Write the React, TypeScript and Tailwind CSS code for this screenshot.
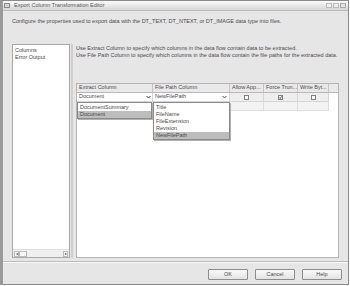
const cols = [
  { label: "Extract Column", w: "w-[76px]" },
  { label: "File Path Column", w: "w-[77px]" },
  { label: "Allow App...", w: "w-[34px]" },
  { label: "Force Trun...", w: "w-[34px]" },
  { label: "Write Byt...", w: "w-[31px]" },
];

function Arrow() {
  return (
    <svg width="5" height="4" viewBox="0 0 5 4" className="shrink-0">
      <path d="M0.5 1 L2.5 3 L4.5 1" fill="none" stroke="#444" strokeWidth="1" />
    </svg>
  );
}

function Check({ checked }: { checked?: boolean }) {
  return (
    <div className="w-[5px] h-[5px] border border-[#808080] bg-white flex items-center justify-center">
      {checked && (
        <svg width="3" height="3" viewBox="0 0 3 3">
          <path d="M0.3 1.5 L1.2 2.5 L2.7 0.4" fill="none" stroke="#222" strokeWidth="0.8" />
        </svg>
      )}
    </div>
  );
}

export default function App() {
  return (
    <div className="w-[350px] h-[286px] bg-white font-['Liberation_Sans',Arial,sans-serif] text-[5.5px] leading-none text-[#4a4a4a]">
      <div className="w-[349px] h-[285px] border border-[#8a8a8a] border-l-[3px] border-l-[#9a9a9a] bg-[#e6e6e6] flex flex-col">
        {/* Title bar */}
        <div className="h-[10px] shrink-0 bg-linear-to-b from-[#fbfbfb] to-[#d6d6d6] border-b border-[#bdbdbd] flex items-center pl-[1px] pr-[2px]">
          <div className="w-[6px] h-[5px] border border-[#888] bg-[#cfd6de] mr-[4px]" />
          <span className="text-[#555]">Export Column Transformation Editor</span>
          <div className="ml-auto flex gap-[1px]">
            <div className="w-[6px] h-[5px] border border-[#bbb] bg-[#eee]" />
            <div className="w-[6px] h-[5px] border border-[#bbb] bg-[#eee]" />
            <div className="w-[6px] h-[5px] border border-[#aaa] bg-[#e4e4e4]" />
          </div>
        </div>

        {/* Description */}
        <div className="mt-[7px] pl-[9px] leading-[7px]">
          Configure the properties used to export data with the DT_TEXT, DT_NTEXT, or DT_IMAGE data type into files.
        </div>

        {/* Main */}
        <div className="mt-[19px] flex h-[214px] pl-[9px]">
          {/* Left list */}
          <div className="w-[58px] bg-white border border-[#a8a8a8] flex flex-col">
            <div className="flex-1 pl-[2px] pt-[2px] leading-[7px]">
              <div>Columns</div>
              <div>Error Output</div>
            </div>
            <div className="h-[8px] bg-[#efefef] flex items-center px-[1px] border-t border-[#e0e0e0]">
              <div className="w-[5px] h-[6px] border border-[#bbb] bg-[#f6f6f6] text-[4px] flex items-center justify-center">◂</div>
              <div className="w-[8px] h-[6px] border border-[#bbb] bg-[#f8f8f8]" />
              <div className="ml-auto w-[5px] h-[6px] border border-[#bbb] bg-[#f6f6f6] text-[4px] flex items-center justify-center">▸</div>
            </div>
          </div>
          <div className="w-[2px] ml-[1px] bg-[#cfcfcf]" />

          {/* Right side */}
          <div className="ml-[3px] w-[263px] flex flex-col">
            <div className="leading-[7px] pt-[1px] h-[39px] whitespace-nowrap">
              <div>Use Extract Column to specify which columns in the data flow contain data to be extracted.</div>
              <div>Use File Path Column to specify which columns in the data flow contain the file paths for the extracted data.</div>
            </div>
            <div className="relative flex-1 bg-white border border-[#b5b5b5]">
              {/* header */}
              <div className="flex h-[9px] bg-[#e9e9e9] border-b border-[#b8b8b8]">
                {cols.map((c) => (
                  <div key={c.label} className={`${c.w} shrink-0 whitespace-nowrap overflow-hidden border-r border-[#c4c4c4] pl-[2px] flex items-center`}>
                    {c.label}
                  </div>
                ))}
              </div>
              {/* row 1 */}
              <div className="flex h-[9px]">
                <div className="w-[76px] border-r border-b border-[#d6d6d6] bg-white flex items-center pl-[2px] pr-[1px]">
                  <span className="flex-1">Document</span>
                  <Arrow />
                </div>
                <div className="w-[77px] border-r border-b border-[#d6d6d6] bg-white flex items-center pl-[2px] pr-[2px]">
                  <span className="flex-1">NewFilePath</span>
                  <Arrow />
                </div>
                <div className="w-[34px] border-r border-b border-[#d6d6d6] bg-[#eeeeee] flex items-center justify-center">
                  <Check />
                </div>
                <div className="w-[34px] border-r border-b border-[#d6d6d6] bg-[#eeeeee] flex items-center justify-center">
                  <Check checked />
                </div>
                <div className="w-[31px] border-r border-b border-[#d6d6d6] bg-[#eeeeee] flex items-center justify-center">
                  <Check />
                </div>
              </div>
              {/* row 2 */}
              <div className="flex h-[9px]">
                {cols.map((c) => (
                  <div key={c.label} className={`${c.w} border-r border-b border-[#dedede] bg-[#f3f3f3]`} />
                ))}
              </div>

              {/* dropdown 1 */}
              <div className="absolute left-0 top-[18px] w-[75px] bg-white border border-[#8a8a8a] shadow-[1px_1px_0_#b0b0b0] leading-[7px] pt-[1px]">
                <div className="pl-[2px]">DocumentSummary</div>
                <div className="pl-[2px] bg-[#bdbdbd] h-[7px]">Document</div>
              </div>
              {/* dropdown 2 */}
              <div className="absolute left-[76px] top-[18px] w-[77px] bg-white border border-[#8a8a8a] shadow-[1px_1px_0_#b0b0b0] leading-[7px] pt-[1px]">
                <div className="pl-[2px]">Title</div>
                <div className="pl-[2px]">FileName</div>
                <div className="pl-[2px]">FileExtension</div>
                <div className="pl-[2px]">Revision</div>
                <div className="pl-[2px] bg-[#bdbdbd]">NewFilePath</div>
              </div>
            </div>
          </div>
        </div>

        {/* Separator */}
        <div className="mt-[3px] border-t border-[#bdbdbd] border-b border-b-[#f8f8f8]" />

        {/* Buttons */}
        <div className="mt-[6px] flex justify-end gap-[7px] pr-[6px]">
          {["OK", "Cancel", "Help"].map((b) => (
            <div
              key={b}
              className="w-[40px] h-[11px] border border-[#8d8d8d] rounded-[1px] bg-linear-to-b from-[#fafafa] to-[#e2e2e2] flex items-center justify-center"
            >
              {b}
            </div>
          ))}
        </div>
      </div>
    </div>
  );
}
